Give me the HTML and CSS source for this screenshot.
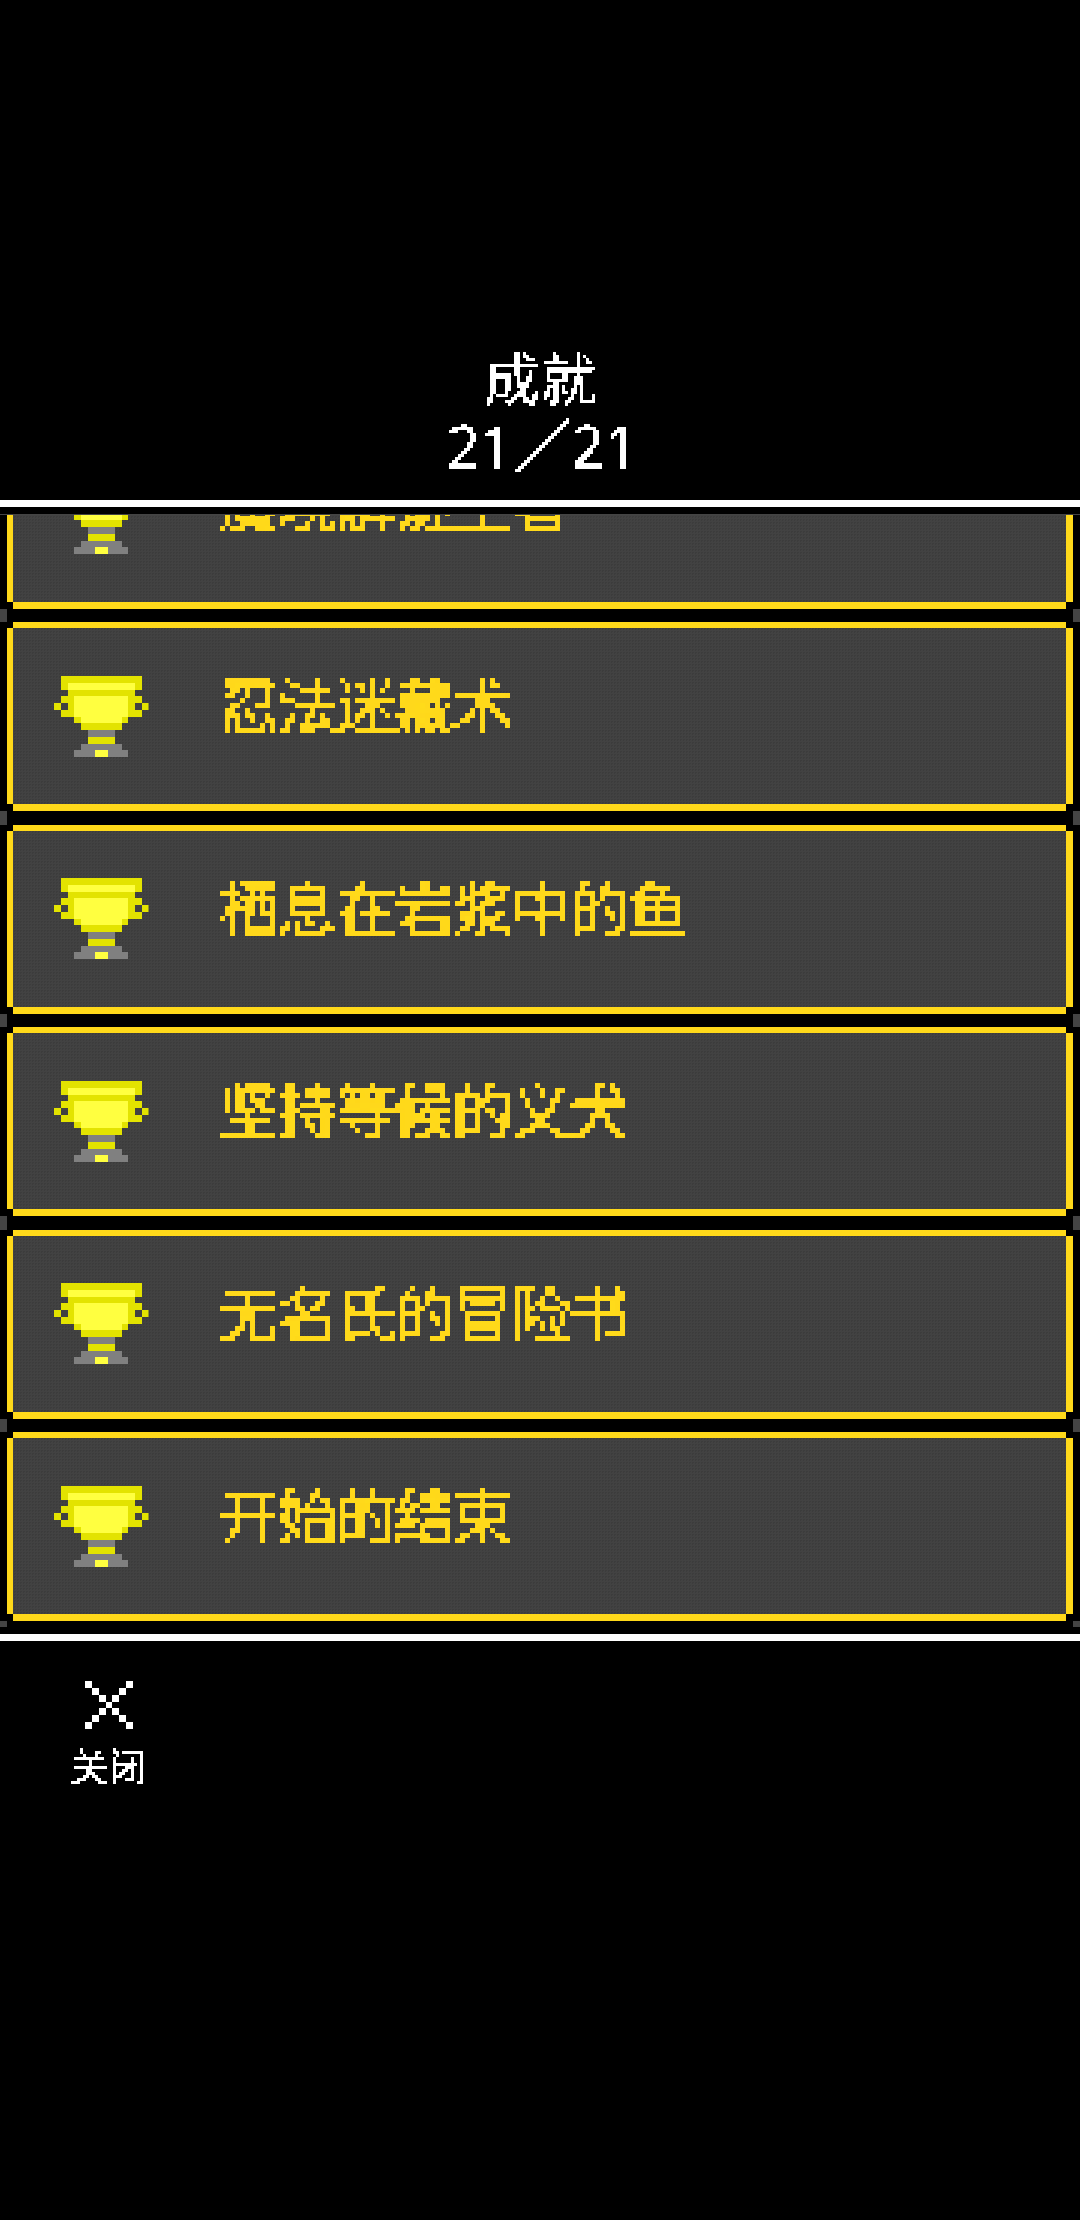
FILE: index.html
```html
<!DOCTYPE html>
<html lang="zh-CN">
<head>
    <meta charset="UTF-8">
    <title>成就</title>
    <link rel="stylesheet" href="styles.css">
</head>
<body>
    <!-- filters that turn the system font into chunky pixels -->
    <svg class="defs" width="0" height="0" aria-hidden="true">
        <filter id="px5" x="0" y="0" width="100%" height="100%" color-interpolation-filters="sRGB">
            <feGaussianBlur in="SourceGraphic" stdDeviation="0.8" result="soft"/>
            <feFlood x="2" y="2" width="1" height="1" flood-color="#000"/>
            <feComposite width="5" height="5"/>
            <feTile result="grid"/>
            <feComposite in="soft" in2="grid" operator="in"/>
            <feMorphology operator="dilate" radius="2"/>
            <feComponentTransfer>
                <feFuncA type="discrete" tableValues="0 1 1 1"/>
            </feComponentTransfer>
        </filter>
        <filter id="px3" x="0" y="0" width="100%" height="100%" color-interpolation-filters="sRGB">
            <feFlood x="1" y="1" width="1" height="1" flood-color="#000"/>
            <feComposite width="3" height="3"/>
            <feTile result="grid"/>
            <feComposite in="SourceGraphic" in2="grid" operator="in"/>
            <feMorphology operator="dilate" radius="1"/>
            <feComponentTransfer>
                <feFuncA type="discrete" tableValues="0 1 1 1"/>
            </feComponentTransfer>
        </filter>
        <symbol id="trophy" viewBox="0 0 14 12">
            <path class="cup-dark" d="M1 0h12v1h-1v2h1v3h-2v1h-1v1H4V7H3V6H1V3h1V1H1zM0 4h1v1H0zM13 4h1v1h-1zM5 9h4v1H5z"/>
            <path class="cup-dark" d="M1 1h1v1H1zM12 1h1v1h-1z"/>
            <path class="cup-light" d="M2 1h10v1H2zM3 3h8v3h-1v1H4V6H3zM6 11h2v1H6z"/>
            <path class="cup-base" d="M5 8h4v1H5zM4 10h6v1h1v1H8v-1H6v1H3v-1h1z"/>
            <path class="cup-hole" d="M1 4h1v1H1zM12 4h1v1h-1z"/>
        </symbol>
    </svg>

    <header class="top">
        <h1 class="title">成就</h1>
        <div class="count">21／21</div>
    </header>

    <main class="panel">
        <ul class="list">
            <li class="row"><div class="row-body"><svg class="trophy"><use href="#trophy"/></svg><span class="name">魔境解谜王者</span></div></li>
            <li class="row"><div class="row-body"><svg class="trophy"><use href="#trophy"/></svg><span class="name">忍法迷藏术</span></div></li>
            <li class="row"><div class="row-body"><svg class="trophy"><use href="#trophy"/></svg><span class="name">栖息在岩浆中的鱼</span></div></li>
            <li class="row"><div class="row-body"><svg class="trophy"><use href="#trophy"/></svg><span class="name">坚持等候的义犬</span></div></li>
            <li class="row"><div class="row-body"><svg class="trophy"><use href="#trophy"/></svg><span class="name">无名氏的冒险书</span></div></li>
            <li class="row"><div class="row-body"><svg class="trophy"><use href="#trophy"/></svg><span class="name">开始的结束</span></div></li>
        </ul>
    </main>

    <footer class="bottom">
        <button class="close" type="button">
            <svg class="close-icon" viewBox="0 0 7 7" shape-rendering="crispEdges">
                <path d="M0 0h1v1H0zM1 1h1v1H1zM2 2h1v1H2zM3 3h1v1H3zM4 4h1v1H4zM5 5h1v1H5zM6 6h1v1H6zM6 0h1v1H6zM5 1h1v1H5zM4 2h1v1H4zM2 4h1v1H2zM1 5h1v1H1zM0 6h1v1H0z"/>
            </svg>
            <span class="close-label">关闭</span>
        </button>
    </footer>
</body>
</html>
```

FILE: styles.css
```css
* {
    margin: 0;
    padding: 0;
    box-sizing: border-box;
}

html, body {
    background-color: #000;
}

body {
    width: 1080px;
    height: 2220px;
    overflow: hidden;
    font-family: "Noto Sans CJK SC", "Noto Sans", sans-serif;
    color: #fff;
}

.defs {
    position: absolute;
}

/* header */
.top {
    height: 500px;
    display: flex;
    flex-direction: column;
    align-items: center;
    justify-content: flex-end;
    padding-bottom: 20px;
}

.title {
    font-size: 56px;
    font-weight: 400;
    line-height: 72px;
    padding: 0 6px;
    filter: url(#px3);
}

.count {
    font-family: "Noto Sans", "Noto Sans CJK SC", sans-serif;
    font-size: 58px;
    letter-spacing: 0.2px;
    line-height: 68px;
    padding: 0 2px 0 7px;
    filter: url(#px3);
}

/* achievement list */
.panel {
    box-sizing: content-box;
    height: 1113px;
    padding: 7px 0;
    border-top: 7px solid #fff;
    border-bottom: 7px solid #fff;
}

.list {
    height: 100%;
    list-style: none;
    display: flex;
    flex-direction: column;
    justify-content: flex-end;
    gap: 13.5px;
    padding-bottom: 6px;
    overflow: hidden;
    border-top: 1px solid #444;
}

.row {
    flex: none;
    position: relative;
    margin: 0 14px 0 13px;
    border-top: 6px solid #ffd91a;
    border-bottom: 7px solid #ffd91a;
}

/* grey stubs at the screen edge, between two rows */
.row::before,
.row::after {
    content: "";
    position: absolute;
    top: calc(100% + 7px);
    width: 7px;
    height: 13.5px;
    background-color: #444;
}

.row::before {
    left: -13px;
}

.row::after {
    right: -14px;
}

.row-body {
    height: 176px;
    display: flex;
    align-items: center;
    gap: 71px;
    padding-left: 41px;
    background-color: #424242;
    background-image: conic-gradient(#3c3c3c 25%, transparent 0);
    background-size: 3px 3px;
    box-shadow: -6px 0 0 #ffd91a, 7px 0 0 #ffd91a;
}

.trophy {
    flex: none;
    width: 94.5px;
    height: 81px;
    shape-rendering: crispEdges;
}

.cup-dark {
    fill: #e3e300;
}

.cup-light {
    fill: #ffff40;
}

.cup-base {
    fill: #808080;
}

.cup-hole {
    fill: #424242;
}

.name {
    font-size: 60px;
    font-weight: 400;
    letter-spacing: -1.7px;
    line-height: 70px;
    color: #ffd91a;
    margin-bottom: 26px;
    filter: url(#px5);
}

/* close button */
.bottom {
    padding: 40px 0 0 73px;
}

.close {
    display: flex;
    flex-direction: column;
    align-items: center;
    gap: 16px;
    width: 71px;
    background: none;
    border: none;
    color: #fff;
    font-family: inherit;
}

.close-icon {
    width: 48px;
    height: 48px;
    fill: #fff;
}

.close-label {
    font-size: 38px;
    line-height: 40px;
    white-space: nowrap;
    filter: url(#px3);
}
```
